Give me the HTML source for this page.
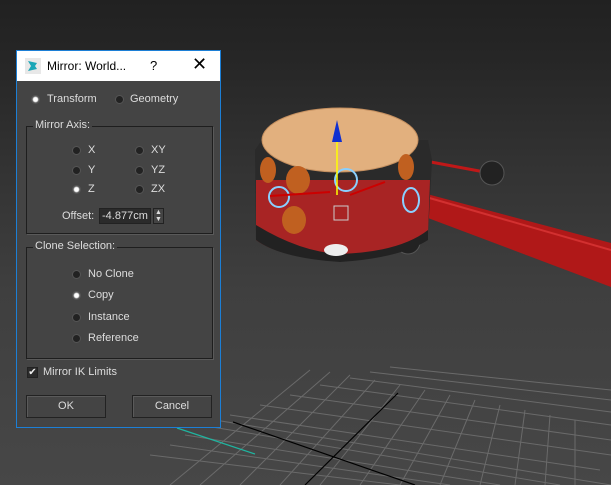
<!DOCTYPE html>
<html><head><meta charset="utf-8"><style>
*{margin:0;padding:0;box-sizing:border-box}
body{width:611px;height:485px;overflow:hidden;position:relative;font-family:"Liberation Sans",sans-serif;font-size:11px;color:#ddd;background:linear-gradient(#212121 0%,#262626 12%,#333 35%,#3f3f3f 60%,#474747 100%)}
.a{position:absolute;white-space:nowrap}
.dlg{position:absolute;left:16px;top:50px;width:205px;height:378px;border:1px solid #1c7fd6;background:#444}
.title{position:absolute;left:0;top:0;width:203px;height:30px;background:#fff;color:#000;font-size:12px}
.r{position:absolute;width:9px;height:9px;border-radius:50%;background:#222;border:1px solid #555}
.r.on{background:radial-gradient(#fff 0 2px,#888 3px,#222 4px)}
.grp{position:absolute;border:1px solid #1e1e1e;box-shadow:1px 1px 0 #5a5a5a}
.lab{position:absolute;top:-8px;left:6px;background:#444;padding:0 2px;color:#ddd}
.btn{position:absolute;height:23px;width:80px;background:#444;border:1px solid #222;box-shadow:inset 1px 1px 0 #5a5a5a;text-align:center;line-height:21px}
</style></head><body>
<svg class="a" style="left:0;top:0" width="611" height="485">
<g stroke="#6a6a6a" stroke-width="1" fill="none">
<path d="M200 425 L560 485 M230 415 L600 470 M260 405 L611 455 M290 395 L611 440 M320 385 L611 425 M350 378 L611 412 M370 372 L611 400 M390 367 L611 390 M150 455 L400 485 M170 445 L450 485 M185 435 L500 485 M215 420 L611 485"/>
<path d="M310 370 L170 485 M330 372 L200 485 M350 375 L240 485 M375 380 L280 485 M400 385 L320 485 M425 390 L360 485 M450 395 L400 485 M475 400 L440 485 M500 405 L480 485 M525 410 L515 485 M550 415 L545 485 M575 420 L575 485"/>
</g>
<path d="M233 422 L415 485" stroke="#000" stroke-width="1.2"/>
<path d="M398 393 L305 485" stroke="#000" stroke-width="1.2"/>
<path d="M177 428 L255 454" stroke="#1fb5a0" stroke-width="1.2"/>
<!-- tube -->
<path d="M412 190 L611 243 L611 287 L412 212 Z" fill="#b01818"/>
<path d="M412 193 L611 250" stroke="#d23030" stroke-width="2"/>
<!-- rods -->
<path d="M420 160 L490 173" stroke="#c01818" stroke-width="3"/>
<circle cx="492" cy="173" r="12" fill="#222" stroke="#555"/>
<circle cx="408" cy="242" r="12" fill="#222" stroke="#555"/>
<!-- body -->
<path d="M255 150 L262 140 L428 140 L432 160 L428 235 Q400 258 340 260 Q280 258 256 240 Z" fill="#2a2a2a"/>
<path d="M256 180 L430 180 L428 235 Q400 258 340 260 Q280 258 256 240 Z" fill="#a82424"/>
<path d="M256 225 Q300 252 340 254 Q400 252 428 230 L428 240 Q400 258 340 262 Q280 258 256 240 Z" fill="#222"/>
<ellipse cx="340" cy="140" rx="78" ry="32" fill="#e2b07e" stroke="#c59060"/>
<ellipse cx="268" cy="170" rx="8" ry="13" fill="#c06020"/>
<ellipse cx="406" cy="167" rx="8" ry="13" fill="#c06020"/>
<ellipse cx="298" cy="180" rx="12" ry="14" fill="#c06020"/>
<ellipse cx="294" cy="220" rx="12" ry="14" fill="#c06020"/>
<circle cx="346" cy="180" r="11" fill="none" stroke="#8ad0ff" stroke-width="2"/>
<circle cx="279" cy="197" r="10" fill="none" stroke="#8ad0ff" stroke-width="2"/>
<ellipse cx="411" cy="200" rx="8" ry="12" fill="none" stroke="#8ad0ff" stroke-width="2"/>
<ellipse cx="336" cy="250" rx="12" ry="6" fill="#eee"/>
<path d="M337 125 L337 195" stroke="#ff0" stroke-width="1.5"/>
<path d="M337 120 L332 142 L342 142 Z" fill="#1030d0"/>
<rect x="334" y="206" width="14" height="14" fill="none" stroke="#ccc"/>
<path d="M270 196 L330 192 M350 195 L385 182" stroke="#c00" stroke-width="2"/>
</svg>
<div class="dlg">
 <div class="title">
  <svg class="a" style="left:8px;top:7px" width="16" height="16"><rect width="16" height="16" fill="#e8e8e8"/><path d="M3 3 L12 5 L10 8 L12 11 L3 13 L6 8Z" fill="#1aa6b7"/></svg>
  <div class="a" style="left:30px;top:8px">Mirror: World...</div>
  <div class="a" style="left:133px;top:7px;font-size:13px">?</div>
  <div class="a" style="left:175px;top:3px;font-size:18px;font-weight:300">✕</div>
 </div>
 <div class="r on" style="left:14px;top:44px"></div><div class="a" style="left:30px;top:42px">Transform</div>
 <div class="r" style="left:98px;top:44px"></div><div class="a" style="left:113px;top:42px">Geometry</div>
 <div class="grp" style="left:9px;top:75px;width:187px;height:108px"><div class="lab">Mirror Axis:</div></div>
 <div class="r" style="left:55px;top:95px"></div><div class="a" style="left:71px;top:93px">X</div>
 <div class="r" style="left:55px;top:115px"></div><div class="a" style="left:71px;top:113px">Y</div>
 <div class="r on" style="left:55px;top:134px"></div><div class="a" style="left:71px;top:132px">Z</div>
 <div class="r" style="left:118px;top:95px"></div><div class="a" style="left:134px;top:93px">XY</div>
 <div class="r" style="left:118px;top:115px"></div><div class="a" style="left:134px;top:113px">YZ</div>
 <div class="r" style="left:118px;top:134px"></div><div class="a" style="left:134px;top:132px">ZX</div>
 <div class="a" style="left:45px;top:159px">Offset:</div>
 <div class="a" style="left:82px;top:157px;width:52px;height:16px;background:#2b2b2b;border:1px solid #222;padding-left:2px;line-height:14px">-4.877cm</div>
 <div class="a" style="left:136px;top:157px;width:11px;height:16px;border:1px solid #222;font-size:7px;line-height:7px;text-align:center">▲<br>▼</div>
 <div class="grp" style="left:9px;top:196px;width:187px;height:112px"><div class="lab">Clone Selection:</div></div>
 <div class="r" style="left:55px;top:219px"></div><div class="a" style="left:71px;top:217px">No Clone</div>
 <div class="r on" style="left:55px;top:240px"></div><div class="a" style="left:71px;top:238px">Copy</div>
 <div class="r" style="left:55px;top:262px"></div><div class="a" style="left:71px;top:260px">Instance</div>
 <div class="r" style="left:55px;top:283px"></div><div class="a" style="left:71px;top:281px">Reference</div>
 <div class="a" style="left:10px;top:316px;width:11px;height:11px;background:#2b2b2b;border:1px solid #222;font-size:10px;line-height:9px;text-align:center;color:#eee">✔</div>
 <div class="a" style="left:26px;top:315px">Mirror IK Limits</div>
 <div class="btn" style="left:9px;top:344px">OK</div>
 <div class="btn" style="left:115px;top:344px">Cancel</div>
</div>
</body></html>
